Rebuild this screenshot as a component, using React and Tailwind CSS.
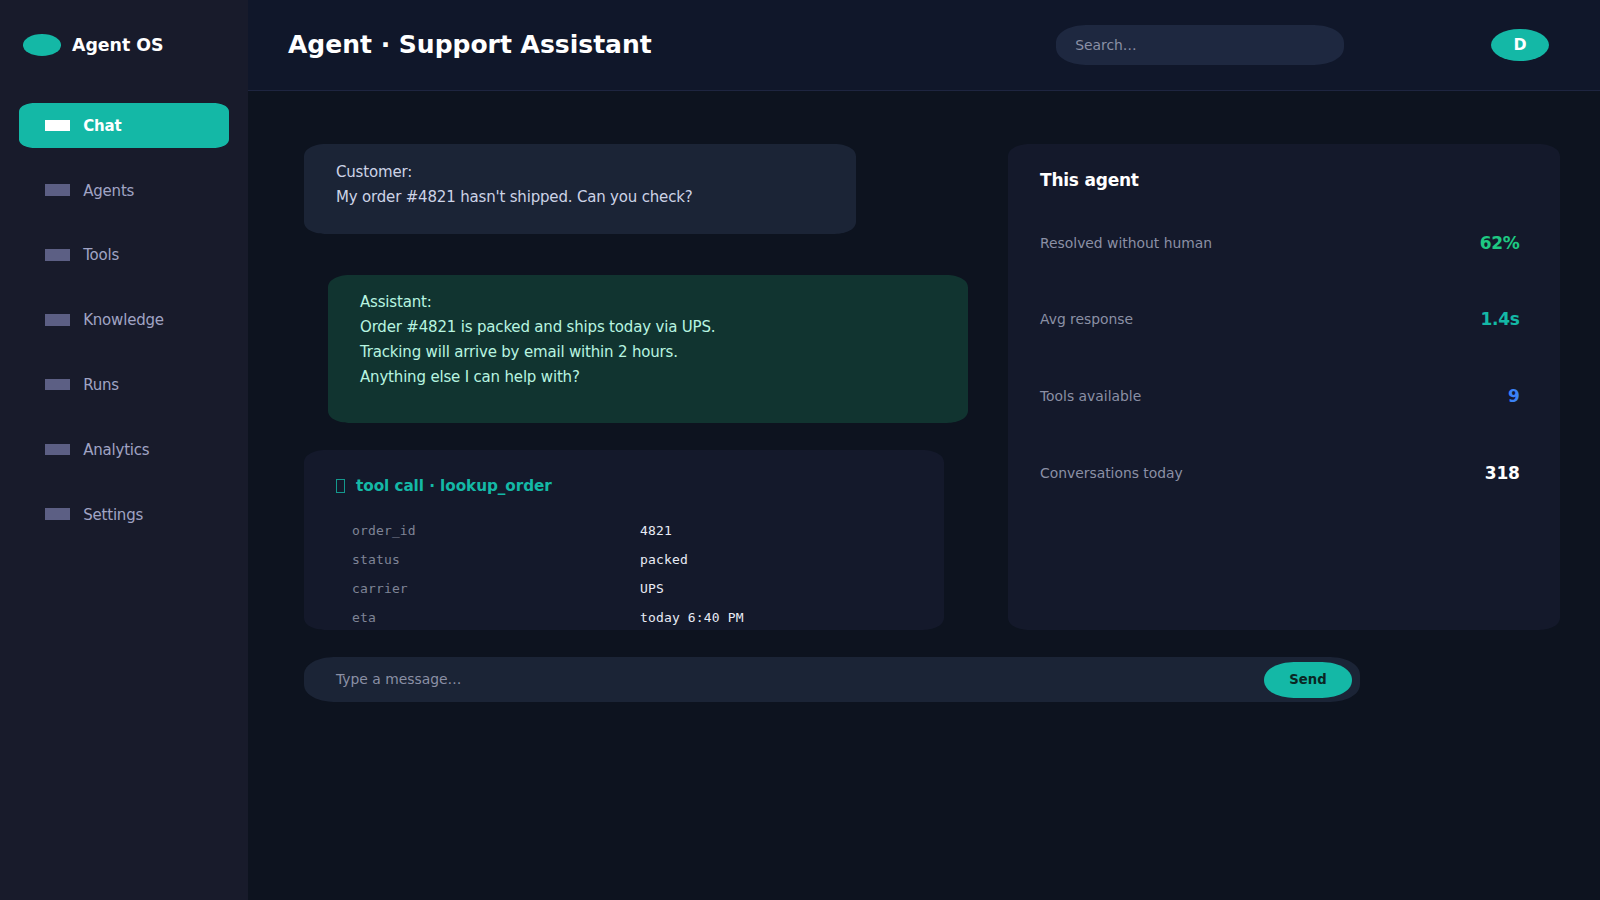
import React from 'react';
import clsx from 'clsx';

const navItems = ['Chat', 'Agents', 'Tools', 'Knowledge', 'Runs', 'Analytics', 'Settings'];

const toolCall = [
  { key: 'order_id', value: '4821' },
  { key: 'status', value: 'packed' },
  { key: 'carrier', value: 'UPS' },
  { key: 'eta', value: 'today 6:40 PM' },
];

const stats = [
  { label: 'Resolved without human', value: '62%', color: 'text-[#1ec882]' },
  { label: 'Avg response', value: '1.4s', color: 'text-[#14b8a6]' },
  { label: 'Tools available', value: '9', color: 'text-[#3b82f6]' },
  { label: 'Conversations today', value: '318', color: 'text-white' },
];

const Sidebar = ({ active }) => (
  <aside className="w-[248px] shrink-0 bg-[#181b2b]">
    <div className="flex h-[90px] items-center pl-[22.6px]">
      <span className="h-[21.6px] w-[38px] rounded-[50%] bg-[#14b8a6]" />
      <span className="ml-[11.4px] text-[17.36px] font-bold text-white">Agent OS</span>
    </div>
    <nav className="flex flex-col gap-[19.8px] px-[19.2px] pt-[12.6px]">
      {navItems.map((item) => (
        <a
          key={item}
          className={clsx(
            'flex h-[45px] items-center rounded-[16px/9px] pl-[25.6px] text-[15px] tracking-[-0.2px] [corner-shape:superellipse(1.1)]',
            item === active ? 'bg-[#14b8a6] font-bold text-white' : 'text-[#a0a4c4]'
          )}
        >
          <span className={clsx('mt-[0.6px] h-[11.5px] w-[25px]', item === active ? 'bg-white' : 'bg-[#5c5f84]')} />
          <span className="mt-[2px] ml-[13.4px]">{item}</span>
        </a>
      ))}
    </nav>
  </aside>
);

const Header = ({ title }) => (
  <header className="flex h-[91px] shrink-0 items-center border-b border-[#1e2540] bg-[#10172a] pl-[40px]">
    <h1 className="w-[768px] text-[25px] font-bold text-white">{title}</h1>
    <div className="flex h-[39.6px] w-[288px] items-center rounded-[32px/18px] bg-[#1e2840] pl-[19.2px] text-[13.89px] text-[#8b90a5] [corner-shape:superellipse(1.1)]">
      Search…
    </div>
    <div className="ml-[147.4px] flex h-[32.4px] w-[57.2px] items-center justify-center rounded-[50%] bg-[#14b8a6] text-[15.8px] font-bold text-white">
      D
    </div>
  </header>
);

const ToolCallCard = ({ name, rows }) => (
  <div className="mt-[27px] h-[180px] w-[640px] rounded-[22.4px/12.6px] bg-[#14192b] pt-[23px] pl-[32px] [corner-shape:superellipse(1.1)]">
    <div className="flex h-[26px] items-center text-[15.28px] font-bold tracking-[-0.08px] text-[#14b8a6]">
      <span className="h-[14px] w-[9px] border border-[#14b8a6]/80" />
      <span className="ml-[11px]">tool call · {name}</span>
    </div>
    <dl className="mt-[17.8px] pl-[16px] font-['DejaVu_Sans_Mono',monospace] text-[13px] tracking-[0.15px]">
      {rows.map((row) => (
        <div key={row.key} className="flex h-[28.8px] items-center">
          <dt className="w-[288px] text-[#7f8496]">{row.key}</dt>
          <dd className="text-[#e8ebf5]">{row.value}</dd>
        </div>
      ))}
    </dl>
  </div>
);

const StatsPanel = () => (
  <section className="h-[486px] w-[552px] rounded-[22.4px/12.6px] bg-[#14192b] px-[32px] pt-[23px] [corner-shape:superellipse(1.1)]">
    <h2 className="text-[17px] leading-[26px] font-bold tracking-[-0.22px] text-white">This agent</h2>
    <div className="mt-[11.8px] pr-[8.4px]">
      {stats.map((stat) => (
        <div key={stat.label} className="flex h-[76.7px] items-center justify-between">
          <span className="text-[13.89px] text-[#8b90a5]">{stat.label}</span>
          <span className={clsx('mt-[0.6px] text-[17px] font-bold tracking-[-0.25px]', stat.color)}>{stat.value}</span>
        </div>
      ))}
    </div>
  </section>
);

const Composer = () => (
  <div className="mt-[27px] flex h-[45px] w-[1056px] items-center justify-between rounded-[32px/18px] bg-[#1b2436] pr-[8px] pl-[32px] text-[13.89px] text-[#8b90a5] [corner-shape:superellipse(1.1)]">
    <span>Type a message…</span>
    <button className="h-[36px] w-[88px] rounded-[32px/18px] bg-[#14b8a6] text-[13.19px] font-bold text-[#0a2623] [corner-shape:superellipse(1.1)]">
      Send
    </button>
  </div>
);

export default function App() {
  return (
    <div className="flex h-[900px] w-[1600px] overflow-hidden bg-[#0d131f] font-['DejaVu_Sans',sans-serif]">
      <Sidebar active="Chat" />
      <div className="flex flex-1 flex-col">
        <Header title="Agent · Support Assistant" />
        <main className="pt-[53px] pl-[56px]">
          <div className="flex">
            <div className="w-[704px]">
              <div className="h-[90px] w-[552px] rounded-[22.4px/12.6px] bg-[#1b2436] pt-[15.6px] pl-[32px] text-[15px] leading-[25.2px] tracking-[-0.18px] text-[#cdd3e6] [corner-shape:superellipse(1.1)]">
                <p>Customer:</p>
                <p>My order #4821 hasn't shipped. Can you check?</p>
              </div>
              <div className="mt-[40.5px] ml-[24px] h-[148.5px] w-[640px] rounded-[22.4px/12.6px] bg-[#113430] pt-[15.2px] pl-[32px] text-[15px] leading-[25.2px] tracking-[-0.18px] text-[#b8f5e0] [corner-shape:superellipse(1.1)]">
                <p>Assistant:</p>
                <p>Order #4821 is packed and ships today via UPS.</p>
                <p>Tracking will arrive by email within 2 hours.</p>
                <p>Anything else I can help with?</p>
              </div>
              <ToolCallCard name="lookup_order" rows={toolCall} />
            </div>
            <StatsPanel />
          </div>
          <Composer />
        </main>
      </div>
    </div>
  );
}
